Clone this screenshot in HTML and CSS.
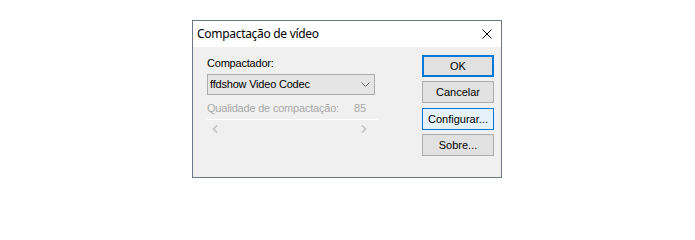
FILE: index.html
```html
<!DOCTYPE html>
<html lang="pt">
<head>
<meta charset="utf-8">
<title>Compactação de vídeo</title>
<link rel="stylesheet" href="styles.css">
</head>
<body>
<div class="dialog">
  <div class="titlebar">
    <span class="title">Compactação de vídeo</span>
    <svg class="close" width="10" height="10" viewBox="0 0 10 10"><path d="M0.5 0.5 L9.5 9.5 M9.5 0.5 L0.5 9.5" stroke="#000" stroke-width="1" fill="none"/></svg>
  </div>
  <div class="content">
    <div class="left">
      <div class="label">Compactador:</div>
      <div class="combo">
        <span class="combo-text">ffdshow Video Codec</span>
        <svg class="chevron" width="9" height="5" viewBox="0 0 9 5"><path d="M0.5 0.5 L4.5 4.5 L8.5 0.5" stroke="#606060" stroke-width="1" fill="none"/></svg>
      </div>
      <div class="quality"><span>Qualidade de compactação:</span><span class="value">85</span></div>
      <div class="scrollbar">
        <svg class="arrow-left" width="6" height="8" viewBox="0 0 6 8"><path d="M5 0.5 L1.5 4 L5 7.5" stroke="#c2c2c2" stroke-width="1.6" fill="none"/></svg>
        <svg class="arrow-right" width="6" height="8" viewBox="0 0 6 8"><path d="M1 0.5 L4.5 4 L1 7.5" stroke="#c2c2c2" stroke-width="1.6" fill="none"/></svg>
      </div>
    </div>
    <div class="buttons">
      <div class="btn btn-default">OK</div>
      <div class="btn btn-gap5">Cancelar</div>
      <div class="btn btn-hover btn-gap5b">Configurar...</div>
      <div class="btn">Sobre...</div>
    </div>
  </div>
</div>
</body>
</html>
```
FILE: styles.css
```css
html, body {
  margin: 0;
  padding: 0;
  background: #ffffff;
}
body {
  padding-top: 20px;
  font-family: "Liberation Sans", Arial, sans-serif;
  font-size: 11px;
  color: #000;
}
.dialog {
  box-sizing: border-box;
  width: 310px;
  height: 158px;
  margin-left: 192px;
  border: 1px solid #6b7785;
  background: #f0f0f0;
  display: flex;
  flex-direction: column;
}
.titlebar {
  height: 26px;
  background: #ffffff;
  display: flex;
  align-items: center;
  padding-left: 4px;
}
.title {
  font-family: "Noto Sans", "Open Sans", sans-serif;
  font-size: 12px;
  letter-spacing: -0.3px;
  line-height: 16px;
  color: #000;
}
.close {
  margin-left: auto;
  margin-right: 9px;
}
.content {
  display: flex;
  align-items: flex-start;
  padding-left: 14px;
}
.left {
  width: 171px;
  padding-top: 10px;
  display: flex;
  flex-direction: column;
}
.label, .quality {
  line-height: 13px;
  letter-spacing: -0.2px;
  white-space: nowrap;
}
.combo {
  box-sizing: border-box;
  width: 168px;
  height: 21px;
  margin-top: 4px;
  border: 1px solid #acacac;
  background: #e5e5e5;
  display: flex;
  align-items: center;
  padding-left: 2px;
}
.combo-text {
  line-height: 19px;
  letter-spacing: -0.2px;
}
.chevron {
  margin-left: auto;
  margin-right: 4px;
}
.quality {
  margin-top: 7px;
  color: #a8a8a8;
  display: flex;
}
.value {
  margin-left: 15px;
}
.scrollbar {
  margin-top: 4px;
  height: 17px;
  border-top: 1px solid #ffffff;
  display: flex;
  align-items: center;
  justify-content: space-between;
  padding-left: 5px;
  padding-right: 11px;
}
.buttons {
  margin-left: 44px;
  padding-top: 8px;
  display: flex;
  flex-direction: column;
}
.btn {
  box-sizing: border-box;
  width: 72px;
  height: 22px;
  border: 1px solid #adadad;
  background: #e1e1e1;
  display: flex;
  align-items: center;
  justify-content: center;
  line-height: 13px;
  margin-top: 4px;
}
.btn-default {
  margin-top: 0;
  border: 2px solid #0078d7;
}
.btn-gap5b {
  margin-top: 5px;
}
.btn-hover {
  border-color: #0078d7;
  background: #e5f1fb;
}
```
